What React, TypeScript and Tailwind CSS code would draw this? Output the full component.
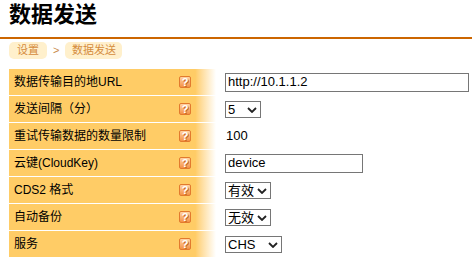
import React from 'react'

const font = "font-['Liberation_Sans','Noto_Sans_CJK_SC',sans-serif]"

function HelpIcon() {
  return (
    <span className="flex h-[12px] w-[12px] items-center justify-center rounded-[2px] border border-[#e27a2e] bg-linear-to-b from-[#ffd3a4] to-[#f39244] text-[11px] font-bold leading-none text-white [text-shadow:1px_1px_0_#c8661e]">
      ?
    </span>
  )
}

function Select({ width, value, options }: { width: string; value: string; options: string[] }) {
  return (
    <div className={`relative ${width}`}>
      <select
        defaultValue={value}
        className="block h-[17px] w-full appearance-none border border-[#767676] py-0 pl-[2px] text-[13px] leading-[15px] text-black outline-none"
      >
        {options.map((o) => (
          <option key={o} value={o}>
            {o}
          </option>
        ))}
      </select>
      <svg
        className="pointer-events-none absolute right-[4px] top-[6px]"
        width="10"
        height="6"
        viewBox="0 0 10 6"
        fill="none"
      >
        <path d="M1 1l4 4 4-4" stroke="#222" strokeWidth="1.8" />
      </svg>
    </div>
  )
}

const rows: { label: string; value: React.ReactNode }[] = [
  {
    label: '数据传输目的地URL',
    value: (
      <input
        defaultValue="http://10.1.1.2"
        className="block h-[19px] w-[244px] border border-[#767676] px-[2px] text-[13px] text-black outline-none"
      />
    ),
  },
  { label: '发送间隔（分）', value: <Select width="w-[36px]" value="5" options={['1', '5', '10']} /> },
  { label: '重试传输数据的数量限制', value: <span className="pl-px text-[13px]">100</span> },
  {
    label: '云键(CloudKey)',
    value: (
      <input
        defaultValue="device"
        className="block h-[19px] w-[138px] border border-[#767676] px-[2px] text-[13px] text-black outline-none"
      />
    ),
  },
  { label: 'CDS2 格式', value: <Select width="w-[46px]" value="有效" options={['有效', '无效']} /> },
  { label: '自动备份', value: <Select width="w-[46px]" value="无效" options={['有效', '无效']} /> },
  { label: '服务', value: <Select width="w-[57px]" value="CHS" options={['CHS', 'ENG']} /> },
]

export default function App() {
  return (
    <div className={`h-[268px] w-[472px] overflow-hidden bg-white text-black ${font}`}>
      {/* Title */}
      <h1 className="h-[37px] pl-[9px] text-[22px] font-bold leading-[30px]">数据发送</h1>
      <div className="h-[2px] bg-[#cc6600]" />

      {/* Breadcrumb */}
      <div className="flex h-[30px] items-start gap-[4px] pl-[9px] pt-[3px] text-[11px] text-[#d58c3c]">
        <span className="flex h-[17px] w-[38px] items-center justify-center rounded-[5px] bg-[#fff0cc]">设置</span>
        <span className="px-[2px] leading-[17px] text-[#c98a4a]">&gt;</span>
        <span className="flex h-[17px] w-[57px] items-center justify-center rounded-[5px] bg-[#fff0cc]">数据发送</span>
      </div>

      {/* Settings */}
      <div className="flex flex-col gap-px pl-[9px]">
        {rows.map((row) => (
          <div key={row.label} className="flex h-[26px] items-center">
            <div className="flex h-full w-[207px] items-center bg-linear-to-r from-[#ffcc66] from-90% to-white pl-[5px]">
              <span className="w-[165px] text-[12px]">{row.label}</span>
              <HelpIcon />
            </div>
            <div className="flex items-center pl-[9px]">{row.value}</div>
          </div>
        ))}
      </div>
    </div>
  )
}
